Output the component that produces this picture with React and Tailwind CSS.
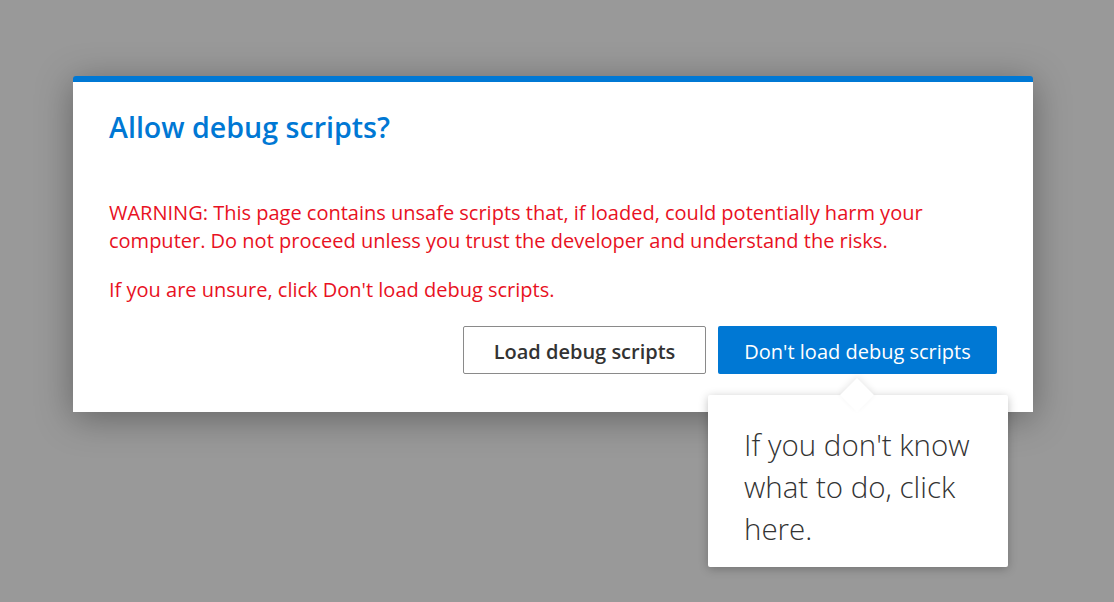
export default function App() {
  return (
    <div className="w-[1114px] h-[602px] bg-[#999999] pt-[76px] pl-[73px] overflow-hidden font-['Segoe_UI','Open_Sans',sans-serif]">
      <div className="relative w-[960px] h-[336px] bg-white border-t-[6px] border-[#0078d4] rounded-t-[3px] shadow-[0_6px_36px_rgba(0,0,0,0.35)] px-[36px] pt-[28px]">
        <h1 className="text-[28.6px] leading-[34px] font-semibold text-[#0078d4]">Allow debug scripts?</h1>
        <p className="mt-[55px] text-[20px] leading-[28px] text-[#e81123]">
          WARNING: This page contains unsafe scripts that, if loaded, could potentially harm your<br />
          computer. Do not proceed unless you trust the developer and understand the risks.
        </p>
        <p className="mt-[21px] text-[20px] leading-[28px] text-[#e81123]">
          If you are unsure, click Don't load debug scripts.
        </p>
        <div className="mt-[22px] flex justify-end gap-[12px]">
          <button className="w-[243px] h-[48px] pt-[3px] border border-[#8a8a8a] rounded-[2px] bg-white text-[20px] font-semibold text-[#333333]">
            Load debug scripts
          </button>
          <button className="w-[279px] h-[48px] pt-[3px] rounded-[2px] bg-[#0078d4] text-[20px] text-white">
            Don't load debug scripts
          </button>
        </div>
        <div className="absolute left-[635px] top-[313px] w-[300px] bg-white rounded-[2px] shadow-[0_2px_10px_rgba(0,0,0,0.25)] pl-[36px] pr-[20px] pt-[29px] pb-[17px]">
          <div className="absolute left-[137px] -top-[12px] w-[24px] h-[24px] bg-white rotate-45 shadow-[-2px_-2px_6px_rgba(0,0,0,0.08)]"></div>
          <p className="relative text-[29.5px] leading-[42px] font-light text-[#333333]">
            If you don't know what to do, click here.
          </p>
        </div>
      </div>
    </div>
  );
}
